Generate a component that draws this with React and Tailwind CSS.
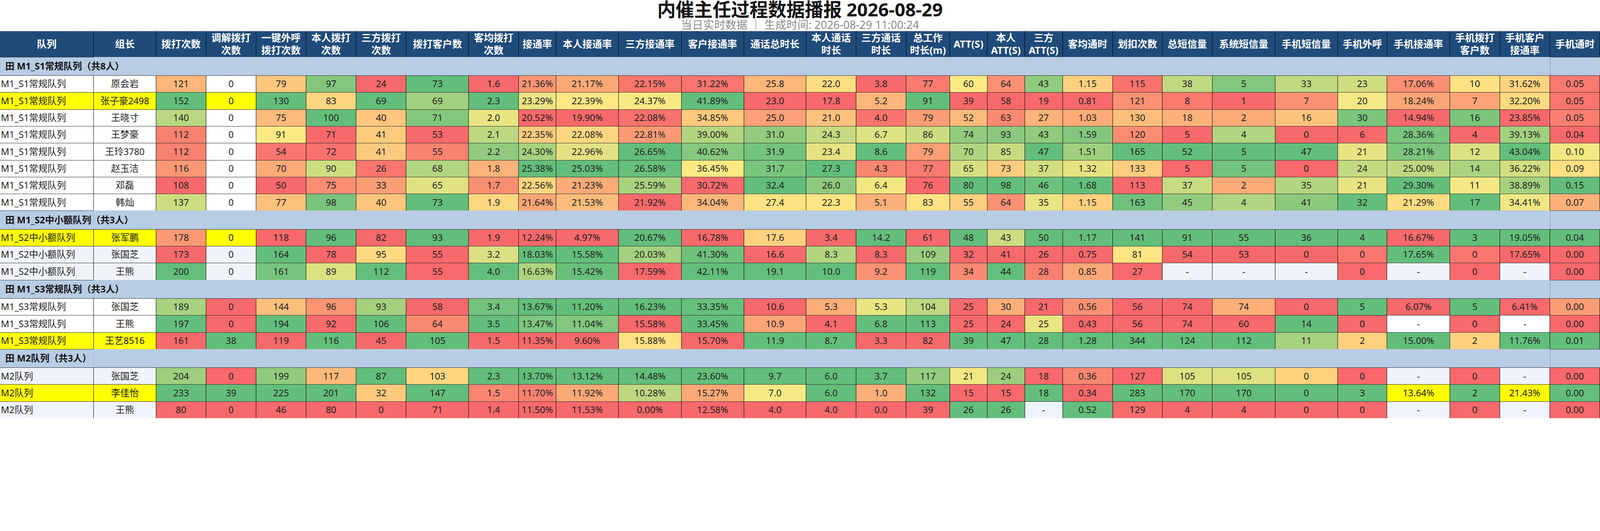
import React from "react";

const COLS = [
  { w: "w-[305px]", h: ["队列"] },
  { w: "w-[203px]", h: ["组长"] },
  { w: "w-[162px]", h: ["拨打次数"] },
  { w: "w-[163px]", h: ["调解拨打", "次数"] },
  { w: "w-[162px]", h: ["一键外呼", "拨打次数"] },
  { w: "w-[163px]", h: ["本人拨打", "次数"] },
  { w: "w-[163px]", h: ["三方拨打", "次数"] },
  { w: "w-[203px]", h: ["拨打客户数"] },
  { w: "w-[162px]", h: ["客均拨打", "次数"] },
  { w: "w-[122px]", h: ["接通率"] },
  { w: "w-[203px]", h: ["本人接通率"] },
  { w: "w-[204px]", h: ["三方接通率"] },
  { w: "w-[203px]", h: ["客户接通率"] },
  { w: "w-[203px]", h: ["通话总时长"] },
  { w: "w-[162px]", h: ["本人通话", "时长"] },
  { w: "w-[162px]", h: ["三方通话", "时长"] },
  { w: "w-[143px]", h: ["总工作", "时长(m)"] },
  { w: "w-[121px]", h: ["ATT(S)"] },
  { w: "w-[122px]", h: ["本人", "ATT(S)"] },
  { w: "w-[123px]", h: ["三方", "ATT(S)"] },
  { w: "w-[163px]", h: ["客均通时"] },
  { w: "w-[161px]", h: ["划扣次数"] },
  { w: "w-[163px]", h: ["总短信量"] },
  { w: "w-[204px]", h: ["系统短信量"] },
  { w: "w-[203px]", h: ["手机短信量"] },
  { w: "w-[161px]", h: ["手机外呼"] },
  { w: "w-[204px]", h: ["手机接通率"] },
  { w: "w-[162px]", h: ["手机拨打", "客户数"] },
  { w: "w-[163px]", h: ["手机客户", "接通率"] },
  { w: "w-[162px]", h: ["手机通时"] },
];

const GROUPS = [
  {
    name: "M1_S1常规队列",
    alt: false,
    rows: [
      { q: "M1_S1常规队列", l: "原会岩", d: ["121", "0", "79", "97", "24", "73", "1.6", "21.36%", "21.17%", "22.15%", "31.22%", "25.8", "22.0", "3.8", "77", "60", "64", "43", "1.15", "115", "38", { v: "5", r: 4.6 }, "33", "23", "17.06%", "10", "31.62%", { v: "0.05", r: 0.047 }] },
      { q: "M1_S1常规队列", l: "张子豪2498", hl: true, d: ["152", "0", "130", "83", "69", "69", "2.3", "23.29%", "22.39%", "24.37%", "41.89%", "23.0", "17.8", "5.2", "91", "39", "58", "19", "0.81", "121", "8", "1", "7", "20", "18.24%", "7", "32.20%", { v: "0.05", r: 0.045 }] },
      { q: "M1_S1常规队列", l: "王晓寸", d: ["140", "0", "75", "100", "40", "71", "2.0", "20.52%", "19.90%", "22.08%", "34.85%", "25.0", "21.0", "4.0", "79", "52", "63", "27", "1.03", "130", "18", "2", "16", "30", "14.94%", "16", "23.85%", { v: "0.05", r: 0.049 }] },
      { q: "M1_S1常规队列", l: "王梦豪", d: ["112", "0", "91", "71", "41", "53", "2.1", "22.35%", "22.08%", "22.81%", "39.00%", "31.0", "24.3", "6.7", "86", "74", "93", "43", "1.59", "120", "5", "4", "0", "6", "28.36%", "4", "39.13%", "0.04"] },
      { q: "M1_S1常规队列", l: "王玲3780", d: ["112", "0", "54", "72", "41", "55", "2.2", "24.30%", "22.96%", "26.65%", "40.62%", "31.9", "23.4", "8.6", "79", "70", "85", "47", "1.51", "165", "52", "5", "47", "21", "28.21%", "12", "43.04%", "0.10"] },
      { q: "M1_S1常规队列", l: "赵玉洁", d: ["116", "0", "70", "90", "26", "68", "1.8", "25.38%", "25.03%", "26.58%", "36.45%", "31.7", "27.3", "4.3", "77", "65", "73", "37", "1.32", "133", "5", { v: "5", r: 4.8 }, "0", "24", "25.00%", "14", "36.22%", "0.09"] },
      { q: "M1_S1常规队列", l: "邓磊", d: ["108", "0", "50", "75", "33", "65", "1.7", "22.56%", "21.23%", "25.59%", "30.72%", "32.4", "26.0", "6.4", "76", "80", "98", "46", "1.68", "113", "37", "2", "35", "21", "29.30%", "11", "38.89%", "0.15"] },
      { q: "M1_S1常规队列", l: "韩灿", d: ["137", "0", "77", "98", "40", "73", "1.9", "21.64%", "21.53%", "21.92%", "34.04%", "27.4", "22.3", "5.1", "83", "55", "64", "35", "1.15", "163", "45", "4", "41", "32", "21.29%", "17", "34.41%", "0.07"] },
    ],
  },
  {
    name: "M1_S2中小额队列",
    alt: true,
    rows: [
      { q: "M1_S2中小额队列", l: "张军鹏", hl: true, d: ["178", "0", "118", "96", "82", "93", "1.9", "12.24%", "4.97%", "20.67%", "16.78%", "17.6", "3.4", "14.2", "61", "48", "43", "50", "1.17", "141", "91", "55", "36", "4", "16.67%", "3", "19.05%", "0.04"] },
      { q: "M1_S2中小额队列", l: "张国芝", d: ["173", "0", "164", "78", "95", "55", "3.2", "18.03%", "15.58%", "20.03%", "41.30%", "16.6", "8.3", "8.3", "109", "32", "41", "26", "0.75", "81", "54", "53", "0", { v: "0", r: 0.2 }, "17.65%", { v: "0", r: 0.15 }, "17.65%", "0.00"] },
      { q: "M1_S2中小额队列", l: "王熊", d: ["200", "0", "161", "89", "112", "55", "4.0", "16.63%", "15.42%", "17.59%", "42.11%", "19.1", "10.0", "9.2", "119", "34", "44", "28", "0.85", "27", "-", "-", "-", "0", "-", "0", "-", "0.00"] },
    ],
  },
  {
    name: "M1_S3常规队列",
    alt: false,
    rows: [
      { q: "M1_S3常规队列", l: "张国芝", d: ["189", "0", "144", "96", "93", "58", "3.4", "13.67%", "11.20%", "16.23%", "33.35%", "10.6", "5.3", "5.3", "104", "25", "30", "21", "0.56", "56", "74", "74", "0", "5", "6.07%", "5", "6.41%", { v: "0.00", r: 0.002 }] },
      { q: "M1_S3常规队列", l: "王熊", d: ["197", "0", "194", "92", "106", "64", "3.5", "13.47%", "11.04%", "15.58%", "33.45%", "10.9", "4.1", "6.8", "113", "25", "24", "25", "0.43", "56", "74", "60", "14", "0", "-", "0", "-", "0.00"] },
      { q: "M1_S3常规队列", l: "王艺8516", hl: true, d: ["161", "38", "119", "116", "45", "105", "1.5", "11.35%", "9.60%", "15.88%", "15.70%", "11.9", "8.7", "3.3", "82", "39", "47", "28", "1.28", "344", "124", "112", "11", "2", "15.00%", "2", "11.76%", "0.01"] },
    ],
  },
  {
    name: "M2队列",
    alt: true,
    rows: [
      { q: "M2队列", l: "张国芝", d: ["204", "0", "199", "117", "87", "103", "2.3", "13.70%", "13.12%", "14.48%", "23.60%", "9.7", "6.0", "3.7", "117", "21", "24", { v: "18", r: 17.6 }, "0.36", "127", "105", "105", { v: "0", r: 0.4 }, "0", "-", "0", "-", { v: "0.00", r: 0 }] },
      { q: "M2队列", l: "李佳怡", hl: true, d: ["233", "39", "225", "201", "32", "147", "1.5", "11.70%", "11.92%", "10.28%", "15.27%", "7.0", "6.0", "1.0", "132", "15", "15", { v: "18", r: 18.4 }, "0.34", "283", "170", "170", { v: "0", r: 1 }, "3", "13.64%", "2", "21.43%", { v: "0.00", r: 1 }] },
      { q: "M2队列", l: "王熊", d: ["80", "0", "46", "80", "0", "71", "1.4", "11.50%", "11.53%", "0.00%", "12.58%", "4.0", "4.0", "0.0", "39", "26", "26", "-", "0.52", "129", "4", "4", { v: "0", r: 0 }, "0", "-", "0", "-", { v: "0.00", r: 0 }] },
    ],
  },
];

const RED = [248, 105, 107];
const YEL = [255, 235, 132];
const GRN = [99, 190, 123];

function scaleColor(t) {
  const [a, b, u] = t < 0.5 ? [RED, YEL, t * 2] : [YEL, GRN, (t - 0.5) * 2];
  const c = a.map((x, i) => Math.round(x + (b[i] - x) * u));
  return `rgb(${c[0]}, ${c[1]}, ${c[2]})`;
}

function cellText(c) {
  return typeof c === "object" ? c.v : c;
}

function cellNum(c) {
  if (typeof c === "object") return c.r;
  if (c === "-") return null;
  return parseFloat(c.replace("%", ""));
}

function groupColors(rows) {
  const n = rows[0].d.length;
  const out = rows.map(() => new Array(n).fill(null));
  for (let j = 0; j < n; j++) {
    const vals = rows.map((r) => cellNum(r.d[j]));
    const nums = vals.filter((v) => v !== null);
    if (nums.length < 2) continue;
    const mn = Math.min(...nums);
    const mx = Math.max(...nums);
    if (mx === mn) continue;
    vals.forEach((v, i) => {
      if (v !== null) out[i][j] = scaleColor((v - mn) / (mx - mn));
    });
  }
  return out;
}

function GroupRow({ name, count }) {
  return (
    <tr>
      <td className="h-[60px] p-0 pl-[17px] bg-[#b8cce4] border-t-2 border-t-[#3c3c3c] border-r border-r-[#a3b8d3] text-[30px] font-bold text-[#111] whitespace-nowrap overflow-visible relative z-10">
        田 {name}（共{count}人）
      </td>
      <td colSpan={28} className="h-[60px] p-0 bg-[#b8cce4] border-t-2 border-t-[#c6c6c6]"></td>
      <td className="h-[60px] p-0 bg-[#b8cce4] border-t-2 border-t-[#3c3c3c] border-l border-l-[#7d8ea6]"></td>
    </tr>
  );
}

function DataRow({ row, alt, colors }) {
  const bg = row.hl ? "bg-[#ffff00]" : alt ? "bg-[#f0f4fa]" : "bg-white";
  return (
    <tr>
      <td className={`h-[55px] p-0 pl-[3px] text-left border-t-2 border-t-[#2e2e2e] border-r border-r-black ${bg}`}>{row.q}</td>
      <td className={`h-[55px] p-0 text-center border-t-2 border-t-[#2e2e2e] border-r border-r-black ${bg}`}>{row.l}</td>
      {row.d.map((c, j) => (
        <td
          key={j}
          className={`h-[55px] p-0 text-center border-t-2 border-t-[#2e2e2e] border-r border-r-black ${bg}`}
          style={colors[j] ? { backgroundColor: colors[j] } : undefined}
        >
          {cellText(c)}
        </td>
      ))}
    </tr>
  );
}

function fitZoom() {
  if (typeof window === "undefined") return 1;
  const w = document.documentElement.clientWidth || window.innerWidth || 5200;
  return w / 5200;
}

export default function App() {
  const zoom = fitZoom();
  return (
    <div
      className="w-[5200px] h-[1360px] bg-white overflow-hidden font-['Noto_Sans','Noto_Sans_CJK_SC',sans-serif] text-[#1e1e1e]"
      style={{ zoom }}
    >
      <div className="h-[100px] flex flex-col items-center">
        <div className="text-[60px] leading-[62px] font-bold text-[#141414]">内催主任过程数据播报 2026-08-29</div>
        <div className="text-[36px] leading-[38px] text-[#8a8a8a]">当日实时数据 ｜ 生成时间: 2026-08-29 11:00:24</div>
      </div>
      <table className="table-fixed border-separate border-spacing-0 w-[5200px] text-[30px] whitespace-nowrap">
        <colgroup>
          {COLS.map((c, i) => (
            <col key={i} className={c.w} />
          ))}
        </colgroup>
        <thead>
          <tr>
            {COLS.map((c, i) => (
              <th
                key={i}
                className="h-[85px] p-0 bg-[#1f4b7a] text-white font-bold text-[32px] leading-[40px] text-center align-middle border-t-2 border-t-[#c8c8c8] border-r border-r-black"
              >
                {c.h.map((line, k) => (
                  <div key={k}>{line}</div>
                ))}
              </th>
            ))}
          </tr>
        </thead>
        <tbody>
          {GROUPS.map((g, gi) => {
            const colors = groupColors(g.rows);
            return (
              <React.Fragment key={gi}>
                <GroupRow name={g.name} count={g.rows.length} />
                {g.rows.map((r, ri) => (
                  <DataRow key={ri} row={r} alt={g.alt} colors={colors[ri]} />
                ))}
              </React.Fragment>
            );
          })}
        </tbody>
      </table>
    </div>
  );
}
